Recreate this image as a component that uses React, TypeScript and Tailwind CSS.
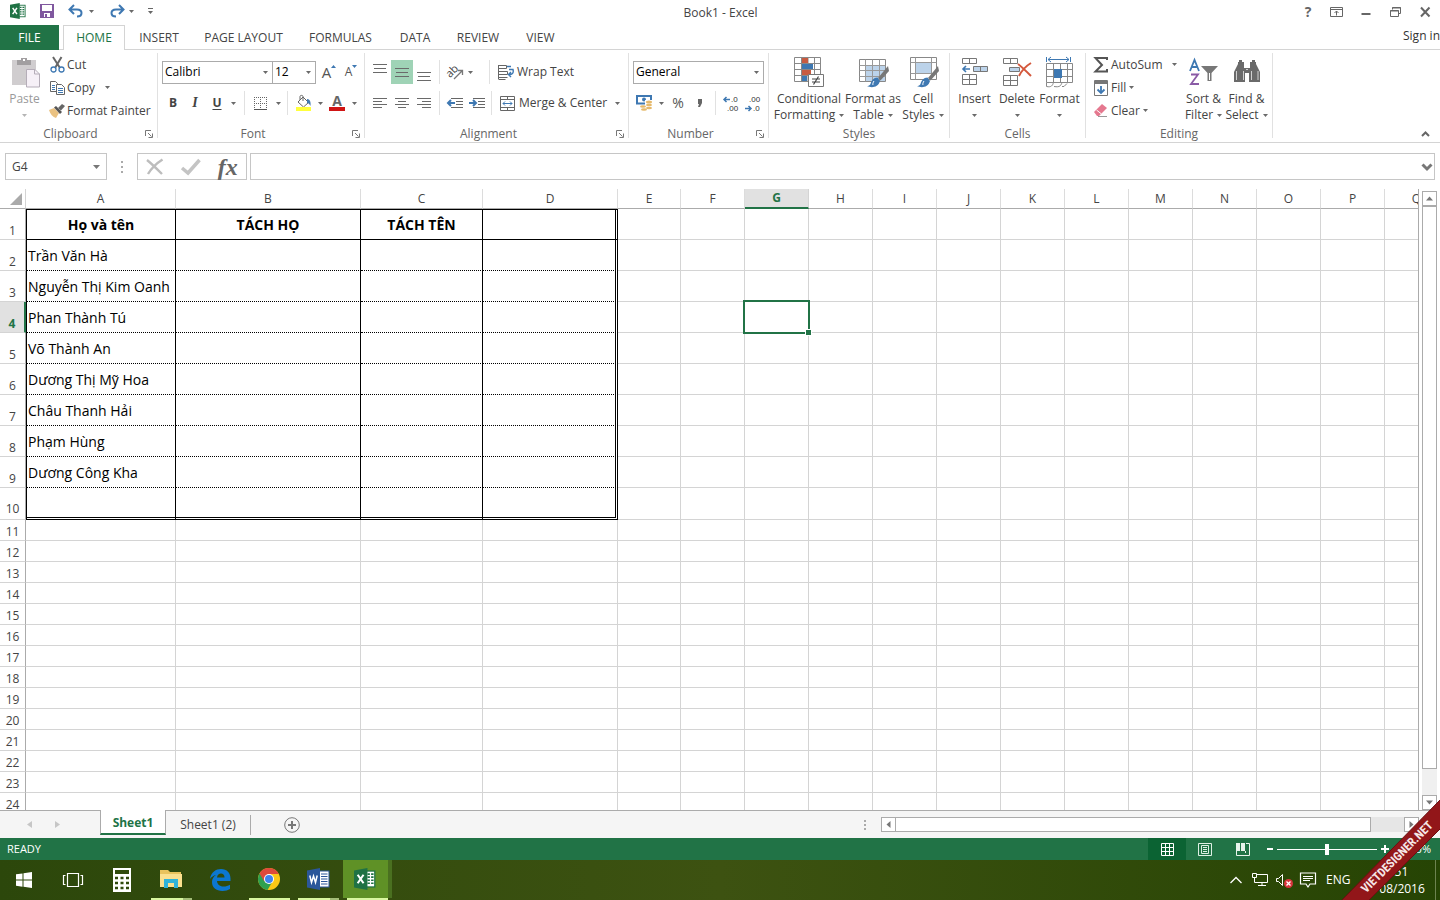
import React, { useState } from "react";

type Kids = { children?: React.ReactNode };

function Caret({ className = "text-[#6a6a6a]" }: { className?: string }) {
  return (
    <svg width="5" height="3" viewBox="0 0 5 3" className={"shrink-0 " + className} aria-hidden="true">
      <path d="M0 0h5L2.500 3z" fill="currentColor" />
    </svg>
  );
}

function Icon({ w, h, children }: Kids & { w: number; h: number }) {
  return (
    <svg width={w} height={h} viewBox={`0 0 ${w} ${h}`} fill="none" className="shrink-0 overflow-visible" aria-hidden="true">
      {children}
    </svg>
  );
}

function ExcelLogo({ size }: { size: number }) {
  return (
    <svg width={size} height={size} viewBox="0 0 18 18" aria-hidden="true">
      <rect x="9" y="2.5" width="8" height="13" fill="#fff" stroke="#1f7244" />
      <path d="M11 5h2M14 5h2M11 7.5h2M14 7.5h2M11 10h2M14 10h2M11 12.5h2M14 12.5h2" stroke="#1f7244" strokeWidth="1.3" />
      <path d="M0 2l11-2v18L0 16z" fill="#1f7244" />
      <path d="M3 5.5l4.8 7M7.8 5.5l-4.8 7" stroke="#fff" strokeWidth="1.7" />
    </svg>
  );
}

function WordLogo() {
  return (
    <svg width="23" height="22" viewBox="0 0 23 22" aria-hidden="true">
      <rect x="12" y="3" width="10" height="16" fill="#fff" stroke="#2b579a" />
      <path d="M14 6h6.5M14 8.5h6.5M14 11h6.5M14 13.5h6.5M14 16h6.5" stroke="#2b579a" strokeWidth="1.2" />
      <path d="M0 2.5L13 0v22L0 19.5z" fill="#2b579a" />
      <path d="M2.8 7.5l1.7 7 2-6.5 2 6.5 1.7-7" stroke="#fff" strokeWidth="1.5" fill="none" />
    </svg>
  );
}

function Launcher() {
  return (
    <button aria-label="More options" className="grid h-4 w-4 place-items-center">
      <Icon w={8} h={8}>
        <path d="M.5 6V.5H6M3 3l3.5 3.5M7.5 3.5v4h-4" stroke="#777" />
      </Icon>
    </button>
  );
}

function Group({ name, width, launcher, children }: Kids & { name: string; width: string; launcher?: boolean }) {
  return (
    <section aria-label={name} className={"flex shrink-0 flex-col pt-[3px] pb-1 " + width}>
      <div className="flex flex-1 flex-col border-r border-[#e1e1e1]">
        <div className="flex flex-1">{children}</div>
        <div className="-mb-1 flex h-4 items-center text-[#666]">
          <span className="flex-1 text-center">{name}</span>
          {launcher && <Launcher />}
        </div>
      </div>
    </section>
  );
}

function Tool({ label, width = "w-[22px]", active, children }: Kids & { label: string; width?: string; active?: boolean }) {
  return (
    <button aria-label={label} className={"flex h-6 shrink-0 items-center justify-center " + width + (active ? " bg-[#9fd3b6]" : "")}>
      {children}
    </button>
  );
}

function Drop({ label, width = "w-[10px]" }: { label: string; width?: string }) {
  return (
    <button aria-label={label} className={"flex h-6 shrink-0 items-center justify-center " + width}>
      <Caret />
    </button>
  );
}

function Sep() {
  return <span className="h-6 w-px shrink-0 bg-[#e1e1e1]" />;
}

function Combo({ label, value, options, width }: { label: string; value: string; options: string[]; width: string }) {
  return (
    <label aria-label={label} className={"flex h-[23px] shrink-0 items-center border border-[#ababab] bg-white pr-1 text-black " + width}>
      <select aria-label={label} defaultValue={value} className="h-full min-w-0 flex-1 appearance-none bg-transparent pl-[2px] outline-none">
        {options.map((o) => (
          <option key={o}>{o}</option>
        ))}
      </select>
      <Caret />
    </label>
  );
}

function Lines({ rows }: { rows: [number, number, number][] }) {
  return (
    <Icon w={14} h={17}>
      {rows.map(([x1, x2, y]) => (
        <path key={y} d={`M${x1} ${y + 0.5}H${x2}`} stroke="#6a6a6a" />
      ))}
    </Icon>
  );
}

function Big({ icon, top, bottom, width, dim }: { icon: React.ReactNode; top: string; bottom?: string; width: string; dim?: boolean }) {
  return (
    <button className={"flex shrink-0 flex-col items-center " + width + (dim ? " text-[#9a9a9a]" : "")}>
      <span className="flex h-[38px] items-end pb-[3px]">{icon}</span>
      <span className="leading-4 whitespace-nowrap">{top}</span>
      <span className="flex h-4 items-center gap-1 leading-4 whitespace-nowrap">
        {bottom}
        <Caret className={dim ? "text-[#b5b5b5]" : "text-[#6a6a6a]"} />
      </span>
    </button>
  );
}

function Small({ icon, text, caret }: { icon: React.ReactNode; text: string; caret?: string }) {
  return (
    <button className="flex h-[23px] items-center gap-[2px]">
      <span className="grid w-4 place-items-center">{icon}</span>
      <span className="whitespace-nowrap">{text}</span>
      {caret && (
        <span className={caret}>
          <Caret />
        </span>
      )}
    </button>
  );
}

function Brush() {
  return (
    <>
      <path d="M30 9L20 21l2.5 2.5L31 14z" fill="#777" />
      <path d="M19.5 20.5c-4 0-6 3-7 6.5-.8 1.5-2 2-3.5 2 4 2 11 2 13-5z" fill="#3e78b2" />
      <path d="M16 24c-1 1.5-1.5 3-1 4" stroke="#fff" />
    </>
  );
}

function TitleBar() {
  return (
    <header className="flex h-[25px] items-center text-[#444]">
      <div className="flex flex-1 items-center pb-[3px] pl-[10px]">
        <ExcelLogo size={16} />
        <button aria-label="Save" className="ml-[14px]">
          <Icon w={14} h={14}>
            <path d="M0 0h14v14H0z" fill="#80589f" />
            <path d="M2 1h10v6H2zM4 9h6v4H4z" fill="#fff" />
            <path d="M5 10h2v3H5z" fill="#80589f" />
          </Icon>
        </button>
        <button aria-label="Undo" className="ml-[14px]">
          <Icon w={16} h={14}>
            <path d="M2 5.5h7c6 0 6 7 0 7M6 1L1.500 5.500 6 10" stroke="#3e78b2" strokeWidth="2" />
          </Icon>
        </button>
        <button aria-label="Undo history" className="ml-[5px]"><Caret /></button>
        <button aria-label="Redo" className="ml-[15px]">
          <Icon w={16} h={14}>
            <path d="M14 5.5H7c-6 0-6 7 0 7M10 1l4.500 4.500L10 10" stroke="#3e78b2" strokeWidth="2" />
          </Icon>
        </button>
        <button aria-label="Redo history" className="ml-1"><Caret /></button>
        <button aria-label="Customize quick access toolbar" className="ml-[14px]">
          <Icon w={5} h={6}>
            <path d="M0 .5h5" stroke="#666" />
            <path d="M0 3h5L2.500 6z" fill="#666" />
          </Icon>
        </button>
      </div>
      <h1>Book1 - Excel</h1>
      <div className="flex flex-1 items-center justify-end gap-[16px] pr-[9px] pb-[2px]">
        <button aria-label="Help" className="w-3 text-[14px] leading-4 font-bold text-[#666]">?</button>
        <button aria-label="Ribbon display options">
          <Icon w={13} h={10}>
            <path d="M.5.5h12v9H.5zM.5 2.500h12M6.500 8.500V4M4.500 6l2-2 2 2" stroke="#666" />
          </Icon>
        </button>
        <button aria-label="Minimize" className="pl-[1px]">
          <Icon w={12} h={10}>
            <path d="M1.500 7h9" stroke="#666" strokeWidth="2" />
          </Icon>
        </button>
        <button aria-label="Restore">
          <Icon w={14} h={10}>
            <path d="M4.500 2.500V.5h8v6h-2M4 1h9M2.500 3.500h8v6h-8zM2 4h9" stroke="#666" />
          </Icon>
        </button>
        <button aria-label="Close" className="pl-[2px]">
          <Icon w={11} h={10}>
            <path d="M1 .5l8.500 9M9.500.5L1 9.500" stroke="#666" strokeWidth="2" />
          </Icon>
        </button>
      </div>
    </header>
  );
}

const TABS: [string, string][] = [
  ["INSERT", "w-[66px]"],
  ["PAGE LAYOUT", "w-[103px]"],
  ["FORMULAS", "w-[91px]"],
  ["DATA", "w-[58px]"],
  ["REVIEW", "w-[68px]"],
  ["VIEW", "w-[57px]"],
];

function TabStrip() {
  return (
    <nav className="flex h-[25px] text-[#444]">
      <button className="w-[59px] shrink-0 bg-[#217346] text-white">FILE</button>
      <span className="w-1 border-b border-[#d4d4d4]" />
      <button className="w-[62px] shrink-0 border border-b-0 border-[#d4d4d4] text-[#217346]">HOME</button>
      <div className="flex flex-1 border-b border-[#d4d4d4] pt-px pl-px">
        {TABS.map(([t, w]) => (
          <button key={t} className={"shrink-0 " + w}>{t}</button>
        ))}
        <a href="#signin" className="mt-[2px] ml-auto whitespace-nowrap text-[#333]">Sign in</a>
      </div>
    </nav>
  );
}

function ClipboardGroup() {
  return (
    <Group name="Clipboard" width="w-[158px]" launcher>
      <Big
        dim
        width="w-[49px]"
        top="Paste"
        icon={
          <Icon w={28} h={31}>
            <path d="M1 3h24v25H1z" fill="#d0cdcf" />
            <path d="M6 3h4V1h6v2h4v5H6z" fill="#a29fa1" />
            <path d="M12 2h2v2h-2z" fill="#fff" />
            <path d="M15.500 12.500h8.500l4.500 4.500v13h-13z" fill="#f6f0f7" stroke="#b5adb8" />
            <path d="M23.500 12.500V17h5" stroke="#b5adb8" />
          </Icon>
        }
      />
      <div className="flex flex-col">
        <Small
          text="Cut"
          icon={
            <Icon w={15} h={16}>
              <path d="M3 0l7 11M11.500 0L5 11" stroke="#666" strokeWidth="2" />
              <circle cx="3.5" cy="12.5" r="2.5" stroke="#3e78b2" strokeWidth="1.3" />
              <circle cx="11.5" cy="12.5" r="2.5" stroke="#3e78b2" strokeWidth="1.3" />
            </Icon>
          }
        />
        <Small
          text="Copy"
          caret="ml-2"
          icon={
            <Icon w={15} h={14}>
              <path d="M.5.5h5l2 2v8h-7z" fill="#fff" stroke="#666" />
              <path d="M2 4.500h3M2 6.500h3M2 8.500h3" stroke="#3e78b2" />
              <path d="M6.500 3.500h5l3 3v7h-8z" fill="#fff" stroke="#666" />
              <path d="M8 7.500h5M8 9.500h5M8 11.500h5" stroke="#3e78b2" />
            </Icon>
          }
        />
        <Small
          text="Format Painter"
          icon={
            <Icon w={16} h={14}>
              <path d="M0 6l5-2 5 5-3 5C4 13 1 10 0 6z" fill="#eac282" />
              <path d="M5 3.500L7 2l6 6-2 2z" fill="#555" />
              <path d="M9 4l4-4 3 2-4 4.500z" fill="#666" />
            </Icon>
          }
        />
      </div>
    </Group>
  );
}

function FontGroup() {
  return (
    <Group name="Font" width="w-[207px]" launcher>
      <div className="flex flex-1 flex-col gap-[7px] pt-[7px] pl-1">
        <div className="flex h-6 items-center">
          <Combo label="Font" value="Calibri" options={["Calibri", "Arial"]} width="w-[111px]" />
          <Combo label="Font size" value="12" options={["11", "12", "14"]} width="-ml-px w-[44px]" />
          <Tool label="Increase font size" width="ml-[2px] w-[22px]">
            <span className="text-[15px] leading-4 text-[#555]">A</span>
            <svg width="5" height="3" viewBox="0 0 5 3" className="mb-[12px]"><path d="M0 3h5L2.500 0z" fill="#3e78b2" /></svg>
          </Tool>
          <Tool label="Decrease font size">
            <span className="text-[12px] leading-4 text-[#555]">A</span>
            <svg width="5" height="3" viewBox="0 0 5 3" className="mb-[12px]"><path d="M0 0h5L2.500 3z" fill="#3e78b2" /></svg>
          </Tool>
        </div>
        <div className="flex h-6 items-center text-[#444]">
          <Tool label="Bold"><span className="font-bold">B</span></Tool>
          <Tool label="Italic"><span className="font-['Liberation_Serif',serif] text-[14px] font-bold italic">I</span></Tool>
          <Tool label="Underline"><span className="font-bold underline underline-offset-2">U</span></Tool>
          <Drop label="Underline styles" />
          <span className="w-[6px]" />
          <Sep />
          <Tool label="Borders" width="w-[30px]">
            <Icon w={13} h={13}>
              <path d="M.5 0v12M6.500 0v12M12.500 0v12M0 .5h13M0 6.500h13" stroke="#666" strokeDasharray="1 1" />
              <path d="M0 12.500h13" stroke="#555" />
            </Icon>
          </Tool>
          <Drop label="Border styles" width="w-[6px]" />
          <span className="w-[6px]" />
          <Sep />
          <Tool label="Fill color" width="w-[30px]">
            <Icon w={17} h={17}>
              <path d="M3 7l5-5 5.500 5.500-5 4.500z" fill="#fff" stroke="#666" />
              <path d="M5 5V1.500C5 0 8 0 8 1.500V6" stroke="#666" />
              <path d="M12 4c3 0 4 3 3.500 7-1-2-2-3-3.500-3z" fill="#3e78b2" />
              <path d="M1 12h15v4H1z" fill="#ffff3c" />
            </Icon>
          </Tool>
          <Drop label="Fill colors" width="w-[5px]" />
          <Tool label="Font color" width="w-[28px]">
            <span className="flex flex-col items-center">
              <span className="h-3 text-[14px] leading-3 font-bold text-[#666]">A</span>
              <span className="h-1 w-4 bg-[#d01515]" />
            </span>
          </Tool>
          <Drop label="Font colors" width="w-[6px]" />
        </div>
      </div>
    </Group>
  );
}

function AlignmentGroup() {
  return (
    <Group name="Alignment" width="w-[264px]" launcher>
      <div className="flex flex-1 flex-col gap-[7px] pt-[7px] pl-1">
        <div className="flex h-6 items-center">
          <Tool label="Top align"><Lines rows={[[0, 14, 0], [1, 13, 4], [0, 14, 8]]} /></Tool>
          <Tool label="Middle align" active><Lines rows={[[0, 14, 4], [1, 13, 8], [0, 14, 12]]} /></Tool>
          <Tool label="Bottom align"><Lines rows={[[0, 14, 8], [1, 13, 12], [0, 14, 16]]} /></Tool>
          <span className="w-1" />
          <Sep />
          <Tool label="Orientation" width="ml-[3px] w-[24px]">
            <Icon w={17} h={15}>
              <text x="-1" y="10" transform="rotate(-45 5 7)" fontSize="11" fill="#444" fontFamily="Open Sans, sans-serif">ab</text>
              <path d="M7 14l8-8M11 5.500h4.500V10" stroke="#777" strokeWidth="1.3" />
            </Icon>
          </Tool>
          <Drop label="Orientation styles" width="w-[6px]" />
          <span className="w-[16px]" />
          <Sep />
          <button className="flex h-6 items-center gap-[3px] pl-2">
            <Icon w={16} h={15}>
              <path d="M.5 0v14M.5.5h8v3h-8M.5 6.500h9v3h-9" stroke="#666" />
              <path d="M.5 12.500h9M.5 14.500h7" stroke="#666" />
              <path d="M9 1.500h4M11 4.500h4c1 4-1 5-4 5M13 7l-2.500 2.500L13 12" stroke="#3e78b2" strokeWidth="1.4" />
            </Icon>
            <span className="whitespace-nowrap">Wrap Text</span>
          </button>
        </div>
        <div className="flex h-6 items-center">
          <Tool label="Align left"><Lines rows={[[0, 14, 3], [0, 9, 6], [0, 14, 9], [0, 9, 12]]} /></Tool>
          <Tool label="Center"><Lines rows={[[0, 14, 3], [3, 11, 6], [0, 14, 9], [3, 11, 12]]} /></Tool>
          <Tool label="Align right"><Lines rows={[[0, 14, 3], [5, 14, 6], [0, 14, 9], [5, 14, 12]]} /></Tool>
          <span className="w-1" />
          <Sep />
          <Tool label="Decrease indent" width="ml-1 w-[22px]">
            <Icon w={16} h={11}>
              <path d="M4 .5h12M9 3.500h7M9 6.500h7M4 9.500h12" stroke="#666" />
              <path d="M1 5h7M4 2L1 5l3 3" stroke="#3e78b2" strokeWidth="2" />
            </Icon>
          </Tool>
          <Tool label="Increase indent">
            <Icon w={16} h={11}>
              <path d="M4 .5h12M9 3.500h7M9 6.500h7M4 9.500h12" stroke="#666" />
              <path d="M0 5h6M4 2l3 3-3 3" stroke="#3e78b2" strokeWidth="2" />
            </Icon>
          </Tool>
          <span className="w-[3px]" />
          <Sep />
          <button className="flex h-6 items-center gap-[4px] pl-2">
            <Icon w={15} h={15}>
              <path d="M.5.5h14v14H.5zM.5 3.500h14M.5 11.500h14M7.500.5v3M7.500 11.500v3" stroke="#666" />
              <path d="M3 7.500h9M5 5.500l-2 2 2 2M10 5.500l2 2-2 2" stroke="#3e78b2" />
            </Icon>
            <span className="whitespace-nowrap">Merge &amp; Center</span>
          </button>
          <span className="flex-1" />
          <Drop label="Merge options" width="mr-[7px] w-[8px]" />
        </div>
      </div>
    </Group>
  );
}

function NumberGroup() {
  return (
    <Group name="Number" width="w-[140px]" launcher>
      <div className="flex flex-1 flex-col gap-[7px] pt-[7px] pl-1">
        <div className="flex h-6 items-center">
          <Combo label="Number format" value="General" options={["General", "Number", "Currency"]} width="w-[131px]" />
        </div>
        <div className="flex h-6 items-center">
          <Tool label="Accounting number format">
            <Icon w={17} h={16}>
              <path d="M1 1h14v7.500H1z" fill="#fff" stroke="#3e78b2" strokeWidth="2" />
              <circle cx="8" cy="4.5" r="2" fill="#3e78b2" />
              <path d="M9 5h8v11H3v-5h6z" fill="#fff" />
              <ellipse cx="13" cy="7" rx="3" ry="1.5" fill="#e5b96b" />
              <ellipse cx="13" cy="10" rx="3" ry="1.2" fill="#e5b96b" />
              <ellipse cx="13" cy="13" rx="3" ry="1.2" fill="#e5b96b" />
              <ellipse cx="7" cy="11.5" rx="3" ry="1.2" fill="#e5b96b" />
              <ellipse cx="8" cy="14.5" rx="3" ry="1.3" fill="#e5b96b" />
            </Icon>
          </Tool>
          <Drop label="Accounting formats" width="w-[12px]" />
          <Tool label="Percent style"><span className="text-[14px] text-[#555]">%</span></Tool>
          <Tool label="Comma style">
            <Icon w={6} h={9}>
              <path d="M1 0h4v4L3 8H1l1-3H1z" fill="#666" />
            </Icon>
          </Tool>
          <span className="w-1" />
          <Sep />
          <Tool label="Increase decimal" width="ml-1 w-[22px]">
            <Icon w={16} h={17}>
              <path d="M1 4.500h6M3.500 2L1 4.500 3.500 7" stroke="#3e78b2" strokeWidth="1.5" />
              <text x="8" y="7" fontSize="8" fill="#333" fontFamily="Liberation Sans, sans-serif">.0</text>
              <text x="4" y="16" fontSize="8" fill="#333" fontFamily="Liberation Sans, sans-serif">.00</text>
            </Icon>
          </Tool>
          <Tool label="Decrease decimal">
            <Icon w={16} h={17}>
              <path d="M0 13.500h6M3.500 11L6 13.500 3.500 16" stroke="#3e78b2" strokeWidth="1.5" />
              <text x="4" y="7" fontSize="8" fill="#333" fontFamily="Liberation Sans, sans-serif">.00</text>
              <text x="8" y="16" fontSize="8" fill="#333" fontFamily="Liberation Sans, sans-serif">.0</text>
            </Icon>
          </Tool>
        </div>
      </div>
    </Group>
  );
}

function StylesGroup() {
  return (
    <Group name="Styles" width="w-[181px]">
      <div className="flex pl-1">
        <Big
          width="w-[72px]"
          top="Conditional"
          bottom="Formatting"
          icon={
            <Icon w={30} h={31}>
              <path d="M.5.5h26v24H.5zM.5 6.500h26M.5 12.500h26M.5 18.500h26M7.500.5v24M20.500.5v24M14 .5v24" fill="#fff" stroke="#888" />
              <path d="M8 1h6v5H8zM8 13h9v5H8z" fill="#c75b41" />
              <path d="M8 7h11v5H8zM8 19h5v5H8z" fill="#3e78b2" />
              <path d="M14.500 17.500h15v12h-15z" fill="#fff" stroke="#777" />
              <path d="M18 22h8M18 25h8M24.500 19.500l-5 8" stroke="#444" strokeWidth="1.2" />
            </Icon>
          }
        />
        <Big
          width="w-[56px]"
          top="Format as"
          bottom="Table"
          icon={
            <Icon w={30} h={31}>
              <path d="M1.500 2.500h26v22h-26z" fill="#fff" stroke="#888" />
              <path d="M8 9h19v15H8z" fill="#bcd3ea" />
              <path d="M1.500 8.500h26M1.500 13.500h26M1.500 19.500h26M7.500 2.500v22M14.500 2.500v22M21.500 2.500v22" stroke="#999" />
              <Brush />
            </Icon>
          }
        />
        <Big
          width="w-[44px]"
          top="Cell"
          bottom="Styles"
          icon={
            <Icon w={30} h={31}>
              <path d="M2.500.5h26v22h-26z" fill="#fff" stroke="#888" />
              <path d="M8 6h15v11H8z" fill="#bcd3ea" />
              <path d="M2.500 5.500h26M2.500 16.500h26M7.500.5v22M23.500.5v22" stroke="#999" />
              <Brush />
            </Icon>
          }
        />
      </div>
    </Group>
  );
}

function CellsGroup() {
  return (
    <Group name="Cells" width="w-[136px]">
      <div className="flex pl-[3px]">
        <Big
          width="w-[43px]"
          top="Insert"
          icon={
            <Icon w={28} h={30}>
              <path d="M1.500.5h14v5h-14zM8.500.5v5M1.500 16.500h14v10h-14zM8.500 16.500v10M1.500 21.500h14" stroke="#777" />
              <path d="M12.500 8.500h14v5h-14zM19.500 8.500v5" fill="#bcd3ea" stroke="#777" />
              <path d="M2 11h7M5 8l-3 3 3 3" stroke="#3e78b2" strokeWidth="1.6" />
            </Icon>
          }
        />
        <Big
          width="w-[42px]"
          top="Delete"
          icon={
            <Icon w={30} h={30}>
              <path d="M1.500.5h14v5h-14zM8.500.5v5M1.500 17.500h14v10h-14zM8.500 17.500v10M1.500 22.500h14" stroke="#777" />
              <path d="M7.500 9.500h10v4h-10z" fill="#bcd3ea" stroke="#777" />
              <path d="M16 6c4 3 8 7 13 12M29 5c-5 3-9 7-12 13" stroke="#d4583c" strokeWidth="2" />
            </Icon>
          }
        />
        <Big
          width="w-[43px]"
          top="Format"
          icon={
            <Icon w={28} h={31}>
              <path d="M2 2.500h21M5 0L2 2.500 5 5M20 0l3 2.500L20 5M.5 0v5M24.500 0v5" stroke="#3e78b2" />
              <path d="M.5 6.500h26v19H.5zM.5 12.500h26M.5 19.500h26M7.500 6.500v19M14.500 6.500v19M21.500 6.500v19" stroke="#888" />
              <path d="M8 12h8v9H8z" fill="#3e78b2" />
              <path d="M.5 25.500v4c5 1 6-1 7-4M8 29.500c6 1 7-1 8-4M16 29.500h2l3-3" stroke="#888" />
            </Icon>
          }
        />
      </div>
    </Group>
  );
}

function EditingGroup() {
  return (
    <Group name="Editing" width="w-[187px]">
      <div className="flex w-[96px] flex-col pl-[7px]">
        <Small
          text="AutoSum"
          caret="ml-[7px]"
          icon={
            <Icon w={14} h={16}>
              <path d="M13 3V1H1.500L8 8l-6.500 6.500H13V12" stroke="#555" strokeWidth="2" />
            </Icon>
          }
        />
        <Small
          text="Fill"
          caret="ml-px"
          icon={
            <Icon w={14} h={16}>
              <path d="M.5.5h13v15H.5z" fill="#fff" stroke="#777" />
              <path d="M1 1h12v3H1z" fill="#777" />
              <path d="M7 6v7M3.500 9.500L7 13l3.500-3.500" stroke="#3e78b2" strokeWidth="1.8" />
            </Icon>
          }
        />
        <Small
          text="Clear"
          caret="ml-px"
          icon={
            <Icon w={14} h={14}>
              <path d="M0 8l8-8 5 4-8 8H3z" fill="#e5788f" />
              <path d="M2.500 6l5 4" stroke="#fff" />
              <path d="M4 12.500h9" stroke="#999" />
            </Icon>
          }
        />
      </div>
      <Big
        width="w-[43px]"
        top="Sort &amp;"
        bottom="Filter"
        icon={
          <Icon w={30} h={29}>
            <path d="M1 12L5.500 1 10 12M3 8h5" stroke="#3e78b2" strokeWidth="1.8" />
            <path d="M2 15.500h7L2 25h8" stroke="#8a5ba6" strokeWidth="1.8" />
            <path d="M12 7h17l-6.500 7v8h-4v-8z" fill="#777" />
            <path d="M20.500 14v7" stroke="#fff" />
          </Icon>
        }
      />
      <Big
        width="w-[43px]"
        top="Find &amp;"
        bottom="Select"
        icon={
          <Icon w={26} h={29}>
            <path d="M5 1h3v2h2v9h1v11H0V13l4-8V3h1zM21 1h-3v2h-2v9h-1v11h11V13l-4-8V3h-1z" fill="#6a6a6a" />
            <path d="M10 9h6v5h-6z" fill="#6a6a6a" />
            <path d="M2.500 12v9M9.500 12v9M17.500 12v9M24 12v9M12 10.500h2" stroke="#d0d0d0" />
          </Icon>
        }
      />
    </Group>
  );
}

function Ribbon() {
  return (
    <div className="flex h-[93px] border-b border-[#d4d4d4] text-[#444]">
      <ClipboardGroup />
      <FontGroup />
      <AlignmentGroup />
      <NumberGroup />
      <StylesGroup />
      <CellsGroup />
      <EditingGroup />
      <button aria-label="Collapse the ribbon" className="mt-auto mr-[10px] mb-[5px] ml-auto">
        <Icon w={9} h={6}>
          <path d="M1 5l3.500-3.500L8 5" stroke="#666" strokeWidth="2" />
        </Icon>
      </button>
    </div>
  );
}

function FormulaBar() {
  return (
    <div className="flex h-[46px] items-start px-[5px] pt-[10px] text-[#444]">
      <label className="flex h-[27px] w-[102px] shrink-0 items-center border border-[#c6c6c6] px-[6px]">
        <input aria-label="Name box" defaultValue="G4" className="min-w-0 flex-1 bg-transparent outline-none" />
        <svg width="7" height="4" viewBox="0 0 7 4" aria-hidden="true"><path d="M0 0h7L3.500 4z" fill="#777" /></svg>
      </label>
      <div className="grid h-[27px] w-[30px] shrink-0 place-items-center">
        <Icon w={2} h={12}>
          <path d="M0 0h2v2H0zM0 5h2v2H0zM0 10h2v2H0z" fill="#aaa" />
        </Icon>
      </div>
      <div className="flex h-[27px] w-[110px] shrink-0 items-center justify-around border border-[#c6c6c6]">
        <button aria-label="Cancel">
          <Icon w={18} h={16}>
            <path d="M1 1c5 4 10 9 15 14M16.500.5C11 4 5 10 2 15" stroke="#bdbdbd" strokeWidth="2.4" />
          </Icon>
        </button>
        <button aria-label="Enter">
          <Icon w={20} h={16}>
            <path d="M1 9l6 5L18.500 1" stroke="#c4c4c4" strokeWidth="3.5" />
          </Icon>
        </button>
        <button aria-label="Insert function" className="font-['Liberation_Serif',serif] text-[24px] leading-6 font-bold text-[#666] italic">fx</button>
      </div>
      <label className="ml-[3px] flex h-[27px] flex-1 items-center border border-[#c6c6c6] pr-[1px] pl-1">
        <input aria-label="Formula" className="min-w-0 flex-1 bg-transparent outline-none" />
        <Icon w={12} h={8}>
          <path d="M1.500 1.500L6 6l4.500-4.500" stroke="#777" strokeWidth="3" />
        </Icon>
      </label>
    </div>
  );
}

const COLS: [string, string][] = [
  ["A", "w-[150px]"],
  ["B", "w-[185px]"],
  ["C", "w-[122px]"],
  ["D", "w-[135px]"],
  ["E", "w-[63px]"],
  ..."FGHIJKLMNOPQ".split("").map((c): [string, string] => [c, "w-[64px]"]),
];

const NAMES = ["Trần Văn Hà", "Nguyễn Thị Kim Oanh", "Phan Thành Tú", "Võ Thành An", "Dương Thị Mỹ Hoa", "Châu Thanh Hải", "Phạm Hùng", "Dương Công Kha"];
const HEADS = ["Họ và tên", "TÁCH HỌ", "TÁCH TÊN", ""];

function cellClass(row: number, col: number) {
  if (row > 10 || col > 3) return "border-r border-b border-[#d4d4d4]";
  let c = "border-black ";
  c += col === 3 ? "border-r-[3px] [border-right-style:double] " : "border-r ";
  if (col === 0) c += "border-l ";
  if (row === 1) c += "border-t border-b text-center font-bold ";
  else if (row === 10) c += "border-b-[3px] [border-bottom-style:double] ";
  else c += "border-b [border-bottom-style:dotted] ";
  return c;
}

function Grid() {
  const rows = Array.from({ length: 24 }, (_, i) => i + 1);
  return (
    <div className="min-w-0 flex-1 overflow-hidden">
      <table className="w-max table-fixed border-separate border-spacing-0 text-[#444]">
        <colgroup>
          <col className="w-[26px]" />
          {COLS.map(([c, w]) => (
            <col key={c} className={w} />
          ))}
        </colgroup>
        <thead>
          <tr className="h-5">
            <th aria-label="Select all" className="w-[26px] border-r border-b border-[#d4d4d4] border-b-[#ababab] p-0">
              <svg width="12" height="12" viewBox="0 0 12 12" className="ml-auto mr-[3px]" aria-hidden="true"><path d="M12 0v12H0z" fill="#aaa" /></svg>
            </th>
            {COLS.map(([c, w]) => (
              <th
                key={c}
                scope="col"
                className={
                  w +
                  (c === "G"
                    ? " border-r border-b-2 border-[#d4d4d4] border-b-[#217346] bg-[#e1e1e1] p-0 leading-4 font-bold text-[#217346]"
                    : " border-r border-b border-[#dcdcdc] border-b-[#ababab] p-0 leading-4 font-normal")
                }
              >
                {c}
              </th>
            ))}
          </tr>
        </thead>
        <tbody>
          {rows.map((r) => (
            <tr key={r} className={r < 10 ? "h-[31px]" : r === 10 ? "h-8" : "h-[21px]"}>
              <th
                scope="row"
                className={
                  "border-b border-[#d4d4d4] px-0 pt-0 align-bottom leading-[17px] " +
                  (r === 10 ? "pb-[2px] " : "pb-0 ") +
                  (r === 4 ? "border-r-2 border-r-[#217346] bg-[#e1e1e1] font-bold text-[#217346]" : "border-r border-r-[#ababab] font-normal")
                }
              >
                {r}
              </th>
              {COLS.map(([c], i) => (
                <td
                  key={c}
                  className={
                    "p-0 text-[14px] leading-[18px] whitespace-nowrap text-black " + (c === "G" && r === 4 ? "relative z-10 " : "") + cellClass(r, i)
                  }
                >
                  {i < 4 && r === 1 && HEADS[i]}
                  {i === 0 && r > 1 && r < 10 && <div className="pt-[2px] pl-px">{NAMES[r - 2]}</div>}
                  {c === "G" && r === 4 && (
                    <span className="absolute -inset-[2px] border-2 border-[#217346]">
                      <span className="absolute -right-1 -bottom-1 h-[7px] w-[7px] border border-white bg-[#217346]" />
                    </span>
                  )}
                </td>
              ))}
            </tr>
          ))}
        </tbody>
      </table>
    </div>
  );
}

function ArrowButton({ label, d }: { label: string; d: string }) {
  return (
    <button aria-label={label} className="grid h-[15px] w-[15px] shrink-0 place-items-center border border-[#ababab] bg-white">
      <Icon w={7} h={7}>
        <path d={d} fill="#777" />
      </Icon>
    </button>
  );
}

function Workbook() {
  return (
    <main className="flex min-h-0 flex-1">
      <div className="flex min-w-0 flex-1 overflow-hidden border-r border-[#ababab]">
        <Grid />
      </div>
      <div className="flex w-[21px] shrink-0 flex-col items-center pt-[2px]">
        <ArrowButton label="Scroll up" d="M0 5.500h7L3.500 1.500z" />
        <div className="flex w-[15px] flex-1 flex-col bg-[#f0f0f0] pb-[26px]">
          <div className="flex-1 border border-[#ababab] bg-white" />
        </div>
        <ArrowButton label="Scroll down" d="M0 1.500h7L3.500 5.500z" />
      </div>
    </main>
  );
}

function SheetTabs() {
  return (
    <div className="flex h-7 shrink-0 bg-[#f5f5f5] text-[#444]">
      <div className="flex w-[100px] shrink-0 items-center gap-[23px] border-t border-[#ababab] pl-[27px]">
        <button aria-label="Previous sheet"><Icon w={5} h={7}><path d="M5 0v7L0 3.500z" fill="#c6c6c6" /></Icon></button>
        <button aria-label="Next sheet"><Icon w={5} h={7}><path d="M0 0v7l5-3.500z" fill="#c6c6c6" /></Icon></button>
      </div>
      <button className="mb-[3px] w-[66px] shrink-0 border-x border-b-2 border-[#ababab] border-b-[#217346] bg-white pt-[3px] font-bold text-[#217346]">Sheet1</button>
      <div className="flex flex-1 items-center border-t border-[#ababab]">
        <button className="h-5 w-[85px] border-r border-[#ababab] leading-5">Sheet1 (2)</button>
        <button aria-label="New sheet" className="ml-[33px]">
          <Icon w={16} h={16}>
            <circle cx="8" cy="8" r="7.3" stroke="#777" />
            <path d="M8 4v8M4 8h8" stroke="#777" strokeWidth="2" />
          </Icon>
        </button>
        <span className="flex-1" />
        <Icon w={2} h={10}>
          <path d="M0 0h2v2H0zM0 4h2v2H0zM0 8h2v2H0z" fill="#aaa" />
        </Icon>
        <div className="ml-[15px] flex w-1/2 max-w-[538px] bg-[#e6e6e6]">
          <ArrowButton label="Scroll left" d="M5.500 0v7L1.500 3.500z" />
          <div className="-ml-px mr-[33px] flex-1 border border-[#ababab] bg-white" />
          <ArrowButton label="Scroll right" d="M1.500 0v7l4-3.500z" />
        </div>
        <span className="w-[21px]" />
      </div>
    </div>
  );
}

function StatusBar() {
  const [zoom, setZoom] = useState(50);
  return (
    <div className="flex h-[22px] shrink-0 items-center bg-[#217346] pl-[7px] text-white">
      <span className="text-[11px]">READY</span>
      <span className="flex-1" />
      <button aria-label="Normal view" className="grid h-full w-[38px] place-items-center bg-[#0b6333]">
        <Icon w={13} h={13}><path d="M.5.5h12v12H.5zM.5 4.500h12M.5 8.500h12M4.500.5v12M8.500.5v12" stroke="#fff" /></Icon>
      </button>
      <button aria-label="Page layout view" className="grid h-full w-[38px] place-items-center">
        <Icon w={14} h={13}><path d="M.5.5h13v12H.5zM3.500 2.500h7v8h-7zM5 4.500h4M5 6.500h4M5 8.500h4" stroke="#dff0e4" /></Icon>
      </button>
      <button aria-label="Page break preview" className="grid h-full w-[38px] place-items-center">
        <Icon w={14} h={13}><path d="M0 0h4v8H0zM5 0h4v8H5z" fill="#e8f4ec" /><path d="M.5 0v12.500h13V.5H10M9.500 8v2" stroke="#e8f4ec" /></Icon>
      </button>
      <button aria-label="Zoom out" className="ml-1 px-px"><Icon w={6} h={12}><path d="M0 6h6" stroke="#fff" strokeWidth="2" /></Icon></button>
      <label className="ml-[3px] flex items-center">
        <input
          aria-label="Zoom"
          type="range"
          value={zoom}
          onChange={(e) => setZoom(Number(e.target.value))}
          className="h-[11px] w-[100px] appearance-none bg-[linear-gradient(#fff,#fff)] bg-[length:100%_1px] bg-center bg-no-repeat [&::-webkit-slider-thumb]:h-[11px] [&::-webkit-slider-thumb]:w-1 [&::-webkit-slider-thumb]:appearance-none [&::-webkit-slider-thumb]:bg-white"
        />
      </label>
      <button aria-label="Zoom in" className="ml-1"><Icon w={8} h={8}><path d="M0 4h8M4 0v8" stroke="#fff" strokeWidth="2" /></Icon></button>
      <span className="w-[51px] pr-[9px] text-right text-[11px]">100%</span>
    </div>
  );
}

function TaskButton({ label, open, stacked, active, children }: Kids & { label: string; open?: boolean; stacked?: boolean; active?: boolean }) {
  return (
    <button aria-label={label} className="flex h-10 w-[49px] shrink-0 flex-col">
      <span className={"flex w-full flex-1 items-center justify-center pr-px " + (active ? "border-r-4 border-[#4a7020] bg-[#5f9126]" : "")}>{children}</span>
      {open && (
        <span className="flex h-[2px] w-full px-1">
          <span className="flex-1 bg-[#d8f7a0]" />
          {stacked && <span className="w-[9px] bg-[#a3bd78]" />}
        </span>
      )}
    </button>
  );
}

function Taskbar() {
  return (
    <footer className="flex h-10 shrink-0 items-center bg-linear-to-r from-[#2c470b] via-[#3d5211] to-[#264404] text-white">
      <TaskButton label="Start">
        <Icon w={16} h={16}><path d="M0 2.300L6.500 1.400v6.200H0zM7.500 1.200L16 0v7.600H7.500zM0 8.500h6.500v6.200L0 13.800zM7.500 8.500H16V16l-8.500-1.200z" fill="#fff" /></Icon>
      </TaskButton>
      <TaskButton label="Task view">
        <Icon w={20} h={15}><path d="M4.500.5h11v13h-11zM2.500 2.500h-2v9h2M17.500 2.500h2v9h-2" stroke="#fff" strokeWidth="1.2" /></Icon>
      </TaskButton>
      <TaskButton label="Calculator">
        <Icon w={18} h={24}>
          <path d="M0 0h18v24H0z" fill="#fff" />
          <path d="M2 2h14v4H2z" fill="#2f4a0c" />
          <path d="M2 10h14M2 15h14M2 20h14" stroke="#2f4a0c" strokeWidth="2.4" strokeDasharray="3 2.5" />
        </Icon>
      </TaskButton>
      <TaskButton label="File Explorer" open stacked>
        <Icon w={22} h={20}>
          <path d="M0 1h8l2 2h11v15H0z" fill="#e9c35d" />
          <path d="M0 5h22v13H0z" fill="#fbe08f" />
          <path d="M4 10h14v9h-4v-5H8v5H4z" fill="#2fb3d9" />
        </Icon>
      </TaskButton>
      <TaskButton label="Edge">
        <Icon w={21} h={22}>
          <path d="M0 10C1 3 6 0 11 0c6 0 9.500 4 9.500 9.500V12H7c.3 4 3.500 5.500 6.500 5.500 2.500 0 4.500-.7 6.500-1.800V20c-2 1.200-4.500 2-7.500 2C6 22 2 18.500 2 13c0-3 1.500-5.500 4-7C3.500 6.500 1.500 8 0 10zM7 8.500h7.500C14.500 6 13 4.500 11 4.500S7.300 6 7 8.500z" fill="#0c77d1" />
        </Icon>
      </TaskButton>
      <TaskButton label="Chrome" open>
        <Icon w={22} h={22}>
          <circle cx="11" cy="11" r="11" fill="#fbc816" />
          <path d="M11 11L1.500 5.500A11 11 0 0 0 9.500 22l5-8.500z" fill="#2fa04f" />
          <path d="M1.500 5.500A11 11 0 0 1 20.800 6H11l-4.700 7.500z" fill="#de4a3c" />
          <circle cx="11" cy="11" r="5" fill="#fff" />
          <circle cx="11" cy="11" r="4" fill="#3f83ee" />
        </Icon>
      </TaskButton>
      <TaskButton label="Word" open stacked><WordLogo /></TaskButton>
      <TaskButton label="Excel" open active><ExcelLogo size={22} /></TaskButton>
      <div className="ml-auto flex h-full items-center">
        <button aria-label="Show hidden icons" className="mr-[10px]"><Icon w={12} h={8}><path d="M.5 7L6 1.500 11.500 7" stroke="#fff" strokeWidth="1.3" /></Icon></button>
        <button aria-label="Network" className="mr-2"><Icon w={16} h={14}><path d="M4.500 1.500h11v8h-11M10 9.500v3M6 12.500h8M.5.5h4v4h-4zM2.500 4.500v5h3" stroke="#fff" /></Icon></button>
        <button aria-label="Volume, muted" className="mr-[7px]">
          <Icon w={17} h={15}>
            <path d="M.5 5.500h2l4-4v11l-4-4h-2z" stroke="#fff" />
            <circle cx="12.5" cy="10.5" r="4.5" fill="#d9343c" />
            <path d="M10.500 8.500l4 4M14.500 8.500l-4 4" stroke="#fff" strokeWidth="1.3" />
          </Icon>
        </button>
        <button aria-label="Notifications" className="mr-[10px]"><Icon w={16} h={16}><path d="M.5 1h15v11H10l-2 3-2-3H.5zM3 4.500h10M3 6.500h10M3 8.500h7" stroke="#fff" strokeWidth="1.2" /></Icon></button>
        <button aria-label="Language" className="w-[24px]">ENG</button>
        <time className="ml-[8px] w-[70px] text-center leading-[17px]">15:51<br />20/08/2016</time>
        <span className="ml-[7px] h-full w-px bg-[#6d8350]" />
        <span className="w-1" />
      </div>
    </footer>
  );
}

function Watermark() {
  return (
    <svg width="100" height="100" viewBox="0 0 100 100" className="pointer-events-none absolute right-0 bottom-0">
      <path d="M2 100L100 0v29L29 100z" fill="#921619" />
      <path d="M2 100L100 0M29 100l71-71" stroke="#6d0e10" />
      <text x="57" y="61" transform="rotate(-45 57 57)" textAnchor="middle" fontSize="12" fontWeight="700" fill="#f6e6e6" fontFamily="Roboto Condensed, Roboto, sans-serif">VIETDESIGNER.NET</text>
    </svg>
  );
}

export default function App() {
  return (
    <div className="relative flex h-screen flex-col overflow-hidden bg-white font-['Open_Sans','Noto_Sans',sans-serif] text-[12px] leading-4">
      <TitleBar />
      <TabStrip />
      <Ribbon />
      <FormulaBar />
      <Workbook />
      <SheetTabs />
      <StatusBar />
      <Taskbar />
      <Watermark />
    </div>
  );
}
